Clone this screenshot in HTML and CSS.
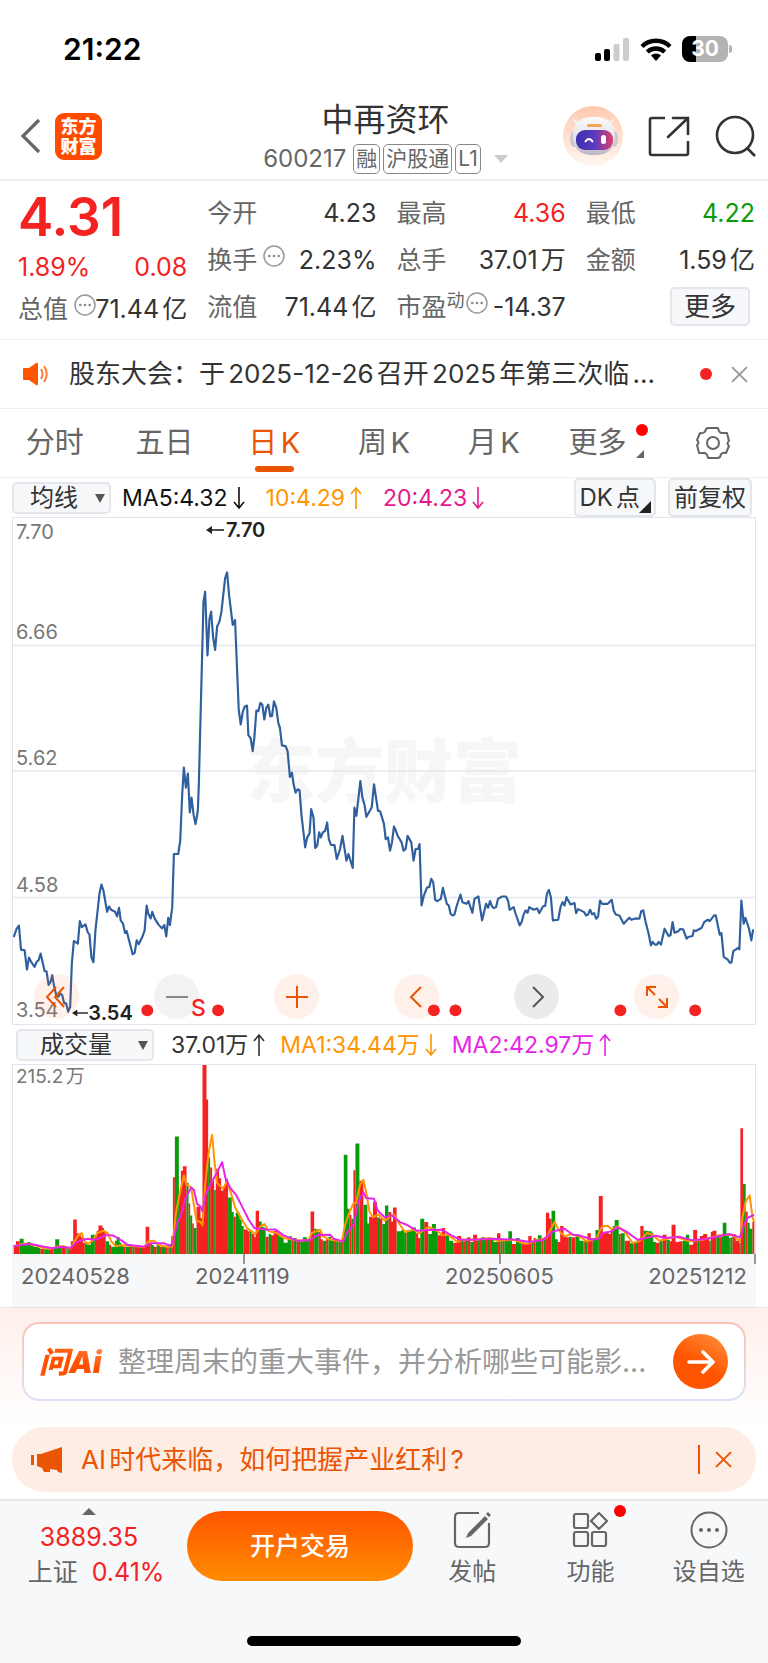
FILE: index.html
```html
<!DOCTYPE html>
<html lang="zh-CN">
<head>
<meta charset="utf-8">
<meta name="viewport" content="width=device-width, initial-scale=1">
<title>中再资环 600217</title>
<link rel="stylesheet" href="styles.css">
</head>
<body>
<svg class="defs" aria-hidden="true">
  <symbol id="up" viewBox="0 0 14 24"><path d="M7 23V2M2 8l5-6 5 6" fill="none" stroke="currentColor" stroke-width="1.6"/></symbol>
  <symbol id="down" viewBox="0 0 14 24"><path d="M7 1v21M2 16l5 6 5-6" fill="none" stroke="currentColor" stroke-width="1.6"/></symbol>
  <symbol id="info" viewBox="0 0 22 22"><circle cx="11" cy="11" r="10" fill="none" stroke="#999" stroke-width="1.5"/><g fill="#888"><circle cx="6.3" cy="11" r="1.3"/><circle cx="11" cy="11" r="1.3"/><circle cx="15.7" cy="11" r="1.3"/></g></symbol>
  <symbol id="close" viewBox="0 0 16 16"><path d="M1 1l14 14M15 1L1 15" fill="none" stroke="currentColor" stroke-width="1.8"/></symbol>
  <symbol id="point" viewBox="0 0 18 10"><path d="M5 5h13" stroke="#222" stroke-width="1.6"/><path d="M0 5l6-4v8z" fill="#222"/></symbol>
</svg>

<div class="status">
  <span class="clock">21:22</span>
  <span class="status-icons">
    <svg width="35" height="24" viewBox="0 0 35 24"><rect x="0" y="16" width="6" height="8" rx="2"/><rect x="9" y="12" width="6" height="12" rx="2"/><g fill="#ccc"><rect x="18.500" y="7" width="6" height="17" rx="2"/><rect x="28" y="1" width="6" height="23" rx="2"/></g></svg>
    <svg width="32" height="24" viewBox="0 0 32 24"><g fill="none" stroke="#000" stroke-width="4.400"><path d="M2 9.500a20 20 0 0 1 28 0"/><path d="M7.300 15a12.500 12.500 0 0 1 17.400 0"/></g><path d="M11 18.500a7.500 7.500 0 0 1 10 0L16 24z"/></svg>
    <span class="battery">30</span>
  </span>
</div>

<header class="head">
  <div class="head-left">
    <button class="plain" aria-label="返回"><svg width="22" height="36" viewBox="0 0 22 36"><path d="M19 2L3 18l16 16" fill="none" stroke="#666" stroke-width="3.200"/></svg></button>
    <a class="brand" href="#">东方<br>财富</a>
  </div>
  <div class="head-mid">
    <h1>中再资环</h1>
    <div class="sub"><span>600217</span><span class="tag">融</span><span class="tag">沪股通</span><span class="tag">L1</span><i class="caret"></i></div>
  </div>
  <div class="head-right">
    <button class="plain" aria-label="智能助手"><svg width="60" height="60" viewBox="0 0 60 60">
      <defs>
        <linearGradient id="halo" x1="0" y1="0" x2="0" y2="1"><stop offset="0" stop-color="#ffc9ae"/><stop offset="1" stop-color="#fff6f0"/></linearGradient>
        <linearGradient id="visor"><stop offset="0" stop-color="#3b2fae"/><stop offset=".5" stop-color="#5b3ac0"/><stop offset="1" stop-color="#e0416a"/></linearGradient>
        <linearGradient id="shell" x1="0" y1="0" x2="0" y2="1"><stop offset="0" stop-color="#fafafa"/><stop offset=".6" stop-color="#e2e0e6"/><stop offset="1" stop-color="#b9b5c2"/></linearGradient>
      </defs>
      <circle cx="30" cy="30" r="30" fill="url(#halo)"/>
      <path d="M9 11q1 7 7 8l4-3q-7 0-11-5zM52 11q-1 7-7 8l-4-3q7 0 11-5z" fill="#eee"/>
      <ellipse cx="11" cy="33" rx="4" ry="8" fill="#c9c6d0"/><ellipse cx="51" cy="33" rx="4" ry="8" fill="#c9c6d0"/>
      <path d="M10 30c0-14 8-19 21-19s21 5 21 19-8 19-21 19-21-5-21-19z" fill="url(#shell)"/>
      <rect x="24" y="18" width="15" height="3" rx="1.500" fill="#f5a55b"/>
      <rect x="13" y="24" width="37" height="20" rx="9" fill="url(#visor)"/>
      <path d="M22 36q4-6 8 0" fill="none" stroke="#fff" stroke-width="2"/><rect x="38" y="29" width="5" height="9" rx="2.500" fill="#fff"/>
    </svg></button>
    <button class="plain" aria-label="分享"><svg width="42" height="42" viewBox="0 0 42 42"><g fill="none" stroke="#333" stroke-width="2.600"><path d="M17 3H4Q2 3 2 5v33q0 2 2 2h34q2 0 2-2V26"/><path d="M25 3h15v16M40 3L20 22" stroke-linecap="round"/></g></svg></button>
    <button class="plain" aria-label="搜索"><svg width="42" height="42" viewBox="0 0 42 42"><g fill="none" stroke="#333" stroke-width="2.600"><circle cx="20" cy="20" r="18"/><path d="M32 33l8 8"/></g></svg></button>
  </div>
</header>

<section class="quote">
  <div class="col col-price">
    <div class="price">4.31</div>
    <div class="cell red"><span>1.89%</span><span>0.08</span></div>
    <div class="cell tight"><span class="lab">总值<svg class="info"><use href="#info"/></svg></span><span>71.44亿</span></div>
  </div>
  <div class="col">
    <div class="cell"><span class="lab">今开</span><span>4.23</span></div>
    <div class="cell"><span class="lab">换手<svg class="info"><use href="#info"/></svg></span><span>2.23%</span></div>
    <div class="cell"><span class="lab">流值</span><span>71.44亿</span></div>
  </div>
  <div class="col">
    <div class="cell"><span class="lab">最高</span><span class="red">4.36</span></div>
    <div class="cell"><span class="lab">总手</span><span>37.01万</span></div>
    <div class="cell tight"><span class="lab">市盈<sup>动</sup><svg class="info flush"><use href="#info"/></svg></span><span>-14.37</span></div>
  </div>
  <div class="col">
    <div class="cell"><span class="lab">最低</span><span class="green">4.22</span></div>
    <div class="cell"><span class="lab">金额</span><span>1.59亿</span></div>
    <div class="cell end"><button class="box more">更多</button></div>
  </div>
</section>

<section class="news">
  <svg width="28" height="24" viewBox="0 0 28 24"><path d="M1 7q0-1 1-1h5l7-5q2-1 2 1v20q0 2-2 1l-7-5H2q-1 0-1-1z" fill="#ff5500"/><path d="M19 7q3 5 0 10M22 4q5.500 8 0 16" fill="none" stroke="#ff7a33" stroke-width="2"/></svg>
  <a href="#">股东大会：于2025-12-26召开2025年第三次临...</a>
  <i class="dot"></i>
  <button class="plain grey" aria-label="关闭"><svg width="17" height="17"><use href="#close"/></svg></button>
</section>

<nav class="tabs">
  <button>分时</button><button>五日</button><button class="on">日K</button><button>周K</button><button>月K</button>
  <button class="has-more"><span>更多<i class="dot"></i></span></button>
  <button aria-label="设置"><svg width="34" height="34" viewBox="0 0 34 34"><g fill="none" stroke="#666" stroke-width="2"><path d="M12 2h10q1 5 4 5l5 0 2 8q-3 2 0 5l-3 7q-5-1-6 4l-2 1H12q-1-5-4-5l-5 0-2-8q3-2 0-5l3-7q5 1 6-4z" stroke-linejoin="round"/><circle cx="17" cy="17" r="6"/></g></svg></button>
</nav>

<section class="bar">
  <label class="pick"><select aria-label="均线"><option>均线</option></select></label>
  <span class="ma black">MA5:4.32<svg class="arr"><use href="#down"/></svg></span>
  <span class="ma orange">10:4.29<svg class="arr"><use href="#up"/></svg></span>
  <span class="ma pink">20:4.23<svg class="arr"><use href="#down"/></svg></span>
  <span class="bar-right"><button class="box dk">DK点</button><button class="box">前复权</button></span>
</section>

<section class="chart">
  <span class="mark">东方财富</span>
  <svg class="plot" viewBox="36 18 2232 1524" preserveAspectRatio="none" fill="none">
    <path d="M36 402H2268M36 780H2268M36 1161H2268" stroke="#e3e8ee" stroke-width="5"/>
    <g stroke="#2f5f9e" stroke-width="6.500" stroke-linejoin="round">
      <polyline points="38,1280 47,1255 54,1246 60,1318 71,1320 78,1378 84,1342 90,1354 101,1370 107,1355 113,1350 119,1330 131,1382 137,1384 143,1424 149,1415 154,1395 160,1430 166,1455 172,1460 178,1450 184,1455 190,1480 196,1480 202,1505 208,1490 213,1360 219,1292 231,1300 237,1232 243,1250 254,1242 261,1266 266,1272 272,1342 278,1356 284,1260 296,1150 302,1122 308,1140 319,1204 325,1188 331,1198 343,1204 349,1218 355,1192 360,1230 367,1240 373,1268 378,1262 385,1290 396,1332 402,1328 408,1290 414,1302 425,1280 432,1260 438,1185 443,1210 450,1224 455,1204 462,1224 473,1242 484,1254 491,1244 497,1278 503,1222 508,1244 515,1190 520,1030 533,1030 539,990 545,850 550,770 556,830 562,788 568,905 573,860 579,910 585,940 592,900 595,820 609,270 614,240 621,432 627,322 632,300 638,378 644,415 650,345 657,330 663,300 674,200 680,182 686,250 697,340 704,325 709,450 715,595 721,640 727,603 733,586 740,583 744,672 751,682 757,720 762,680 768,598 774,600 780,575 786,580 792,625 798,590 804,580 810,615 815,615 821,570 828,590 834,635 839,650 845,703 856,705 862,720 869,798 875,785 880,820 886,845 892,835 898,838 904,915 915,1010 921,980 928,968 933,895 940,920 945,1012 951,1005 957,965 962,980 968,965 975,960 981,935 986,985 993,1003 1003,1003 1010,1045 1020,1015 1027,975 1039,1050 1045,1030 1058,1072 1063,890 1069,915 1081,810 1087,860 1093,880 1099,918 1115,890 1122,820 1128,860 1134,900 1140,900"/>
      <polyline transform="translate(1140 810)" points="0,90 12,130 17,175 24,170 30,210 36,185 42,137 47,148 53,165 65,185 71,210 77,205 83,165 94,185 101,240 107,205 114,205 119,190 125,375 132,345 142,320 148,320 154,295 160,305 166,358 172,362 183,355 189,322 201,370 207,375 212,400 218,405 224,402 231,375 242,342 248,365 260,370 266,362 272,380 278,397 284,355 296,348 307,420 319,370 325,382 331,362 337,378 343,383 349,380 355,355 367,348 379,348 385,360 390,388 402,380 408,400 420,435 426,425 432,402 438,390 444,397 449,380 462,388 473,384 479,398 490,378 497,376 502,340 508,328 514,350 520,420 536,418 543,380 549,365 555,375 561,350 573,372 585,368 590,398 596,386 614,395 620,405 626,402 632,388 638,402 644,398 650,415 656,408 662,360 668,370 685,370 697,358 703,390 709,402 720,405 733,430 744,418 750,412 756,418 768,414 780,415 786,392 792,390 798,420 808,460 815,495 820,485 827,493 833,493 838,485 845,493 856,445 868,467 874,464 880,425 886,457 897,453 903,446 912,447 922,475 927,470 940,467 944,450 950,452 968,442 975,425 986,418 992,422 1005,405 1010,405 1022,463 1027,458 1034,530 1046,538 1052,547 1057,547 1063,512 1070,508 1076,503 1081,507 1087,360 1094,430 1099,412 1110,445 1117,480 1122,450 1125,450"/>
    </g>
  </svg>
  <span class="scale s1">7.70</span><span class="scale s2">6.66</span><span class="scale s3">5.62</span><span class="scale s4">4.58</span><span class="scale s5">3.54</span>
  <div class="controls">
    <button class="warm" aria-label="最早"><svg width="24" height="24" viewBox="0 0 24 24"><path d="M11 2L2 12l9 10M19 2l-9 10 9 10"/></svg></button>
    <button class="cool" aria-label="缩小"><svg width="24" height="24" viewBox="0 0 24 24"><path d="M1 12h22"/></svg></button>
    <button class="warm" aria-label="放大"><svg width="24" height="24" viewBox="0 0 24 24"><path d="M1 12h22M12 1v22"/></svg></button>
    <button class="warm" aria-label="向前"><svg width="24" height="24" viewBox="0 0 24 24"><path d="M16 2L6 12l10 10"/></svg></button>
    <button class="cool deep" aria-label="向后"><svg width="24" height="24" viewBox="0 0 24 24"><path d="M8 2l10 10L8 22"/></svg></button>
    <button class="warm" aria-label="全屏"><svg width="24" height="24" viewBox="0 0 24 24"><path d="M2 11V2h9M2 2l8 8M22 13v9h-9M22 22l-8-8"/></svg></button>
  </div>
  <svg class="plot over" viewBox="36 18 2232 1524" preserveAspectRatio="none" fill="#f52222"><circle cx="440" cy="1501" r="18"/><circle cx="653" cy="1501" r="18"/><circle cx="1302" cy="1501" r="18"/><circle cx="1367" cy="1501" r="18"/><circle cx="1863" cy="1501" r="18"/><circle cx="2088" cy="1501" r="18"/></svg>
  <span class="flag high"><svg><use href="#point"/></svg>7.70</span>
  <span class="flag low"><svg><use href="#point"/></svg>3.54</span>
  <span class="sell">S</span>
</section>

<section class="bar bar-vol">
  <label class="pick wide"><select aria-label="指标"><option>成交量</option></select></label>
  <span class="ma dark">37.01万<svg class="arr"><use href="#up"/></svg></span>
  <span class="ma orange">MA1:34.44万<svg class="arr"><use href="#down"/></svg></span>
  <span class="ma violet">MA2:42.97万<svg class="arr"><use href="#up"/></svg></span>
</section>

<section class="volume">
  <span class="vol-max">215.2万</span>
  <svg class="plot" viewBox="36 40 2232 568" preserveAspectRatio="none" fill="none">
    <path id="bars-up" fill="#f52222"/><path id="bars-down" fill="#0a9b0a"/>
    <g stroke-width="6" stroke-linejoin="round">
      <polyline stroke="#ff9500" points="38,585 60,578 85,578 110,584 130,590 150,592 172,585 190,585 208,592 220,572 232,552 243,545 250,568 262,578 275,568 290,545 308,538 320,545 332,570 345,584 365,582 400,584 430,588 443,570 460,568 475,582 500,586 515,586 527,480 540,415 550,372 558,400 572,408 580,460 588,508 600,512 606,522 614,400 625,300 635,250 642,330 650,395 668,412 680,388 690,420 705,470 725,505 740,530 765,548 780,525 793,518 805,540 830,545 850,560 900,568 925,566 935,545 960,535 968,555 990,565 1025,570 1035,520 1045,490 1060,456 1068,455 1080,400 1090,385 1098,420 1108,480 1118,497 1135,490 1155,508 1170,495 1182,490 1200,520 1215,542 1240,535 1260,545 1285,527 1305,535 1330,552 1345,550 1372,572 1390,565 1430,565 1470,560 1495,568 1540,565 1580,578 1620,565 1640,560 1665,512 1680,540 1695,555 1715,548 1740,555 1762,570 1790,562 1808,525 1825,523 1838,535 1855,525 1875,540 1900,575 1920,570 1943,545 1960,550 1980,568 2030,556 2070,570 2110,565 2160,552 2200,550 2223,570 2230,500 2240,450 2252,432 2260,495 2265,512"/>
      <polyline stroke="#e626e6" points="38,585 60,580 90,578 130,586 155,591 180,586 210,590 225,574 245,566 260,562 285,565 315,552 335,552 355,562 380,580 430,586 450,576 490,576 512,584 520,560 530,515 542,490 555,440 572,408 580,415 590,458 600,465 606,480 615,430 635,390 650,362 665,332 675,380 690,410 708,432 725,465 745,505 762,530 800,535 825,534 850,552 890,568 930,566 950,552 990,550 1000,562 1030,570 1040,545 1060,520 1075,450 1090,422 1098,440 1122,442 1132,475 1140,485 1155,498 1175,492 1200,512 1220,520 1250,538 1285,536 1325,535 1355,552 1380,565 1420,565 1480,562 1550,565 1590,572 1630,566 1660,540 1695,532 1720,550 1740,552 1780,565 1800,560 1810,545 1835,540 1855,528 1880,540 1915,565 1970,553 2000,560 2040,556 2080,567 2120,563 2190,548 2223,558 2235,520 2245,500 2265,490"/>
    </g>
  </svg>
</section>
<div class="axis"><span>20240528</span><span class="tick">20241119</span><span class="tick t2">20250605</span><span class="tick t3">20251212</span></div>

<section class="ask">
  <form class="ask-box">
    <label for="q" class="ask-logo">问Ai</label>
    <input id="q" type="text" placeholder="整理周末的重大事件，并分析哪些可能影...">
    <button type="button" aria-label="发送"><svg width="30" height="26" viewBox="0 0 30 26"><path d="M3 13h24M17 3l10 10-10 10" fill="none" stroke="#fff" stroke-width="3.600" stroke-linecap="round" stroke-linejoin="round"/></svg></button>
  </form>
</section>

<section class="promo">
  <svg width="31" height="26" viewBox="0 0 31 26"><path d="M0 8h3v10H0zM6 7h4L31 0v26l-4-1-1-2-7-1v3h-6l-2-4-5-2z" fill="#ea5504"/></svg>
  <a href="#">AI时代来临，如何把握产业红利?</a>
  <i class="rule"></i>
  <button class="plain" aria-label="关闭"><svg width="17" height="17"><use href="#close"/></svg></button>
</section>

<footer class="foot">
  <div class="foot-row">
    <a class="index" href="#"><i class="tri"></i><span class="red">3889.35</span><span class="index-row"><span class="lab">上证</span><span class="red">0.41%</span></span></a>
    <button class="trade">开户交易</button>
    <a class="act" href="#"><svg width="38" height="38" viewBox="0 0 38 38"><path d="M26 2H6Q2 2 2 6v26q0 4 4 4h26q4 0 4-4V12" fill="none" stroke="#666" stroke-width="2.200"/><path d="M32 5l3 3-17 17-5 2 2-5zM33 3l2-2 3 3-2 2z" fill="#666"/></svg>发帖</a>
    <a class="act" href="#"><span class="ico"><svg width="38" height="38" viewBox="0 0 38 38"><g fill="none" stroke="#666" stroke-width="2.200"><rect x="3" y="3" width="14" height="14" rx="2"/><rect x="3" y="21" width="14" height="14" rx="2"/><rect x="21" y="21" width="14" height="14" rx="2"/><path d="M28 2l8 8-8 8-8-8z" stroke-linejoin="round"/></g></svg><i class="dot"></i></span>功能</a>
    <a class="act" href="#"><svg width="38" height="38" viewBox="0 0 38 38"><circle cx="19" cy="19" r="17.500" fill="none" stroke="#666" stroke-width="2"/><g fill="#666"><circle cx="11" cy="19" r="2"/><circle cx="19" cy="19" r="2"/><circle cx="27" cy="19" r="2"/></g></svg>设自选</a>
  </div>
  <i class="home"></i>
</footer>
<script src="volume.js"></script>
</body>
</html>
```
FILE: styles.css
```css
* { box-sizing: border-box; }
body { margin: 0; background: #fff; color: #333; font: 24px/30px Inter, "Noto Sans CJK SC", sans-serif; text-autospace: normal; }
button, input, select { font: inherit; color: inherit; margin: 0; padding: 0; border: 0; background: none; }
a { color: inherit; text-decoration: none; }
svg { display: block; flex: none; }
i { display: block; }
.defs { position: absolute; width: 0; height: 0; }
.plain { display: flex; }
.red { color: #f52222; }
.green { color: #0a9b0a; }
.grey { color: #999; }
.black { color: #111; }
.orange { color: #ff9500; }
.pink { color: #e6168c; }
.violet { color: #e626e6; }
.lab { color: #666; }
.dot { width: 12px; height: 12px; border-radius: 50%; background: #f52222; flex: none; }

.status { display: flex; justify-content: space-between; align-items: center; padding: 33px 40px 33px 63px; color: #000; }
.clock { font-size: 30px; line-height: 32px; font-weight: 600; }
.status-icons { display: flex; gap: 10px; align-items: center; }
.battery { position: relative; width: 46px; height: 26px; border-radius: 8px; background: linear-gradient(90deg, #000 30%, #b3b3b3 30%); color: #fff; font-size: 21px; line-height: 26px; font-weight: 700; text-align: center; }
.battery::after { content: ""; position: absolute; right: -4px; top: 9px; width: 3px; height: 8px; border-radius: 0 4px 4px 0; background: #b3b3b3; }

.head { display: grid; grid-template-columns: 1fr auto 1fr; align-items: center; height: 83px; padding: 0 11px 6px 20px; border-bottom: 2px solid #eee; }
.head-left { display: flex; align-items: center; gap: 13px; }
.brand { width: 47px; height: 47px; padding-top: 4px; border-radius: 9px; background: #ff4a00; color: #fff; font-size: 18px; line-height: 20px; font-weight: 900; text-align: center; }
.head-mid { display: flex; flex-direction: column; align-items: center; gap: 5px; padding: 3px 6px 0 0; }
h1 { margin: 0; font-size: 32px; line-height: 38px; font-weight: 400; }
.sub { display: flex; align-items: center; gap: 3px; color: #666; font-size: 24px; }
.sub span:first-child { margin-right: 4px; }
.tag { padding: 0 2px; border: 1px solid #888; border-radius: 5px; font-size: 21px; line-height: 28px; }
.caret { margin-left: 10px; border: 7px solid transparent; border-top: 8px solid #ccc; border-bottom: 0; }
.head-right { display: flex; align-items: center; justify-content: flex-end; gap: 25px; }

.quote { display: grid; grid-template-columns: repeat(4, 1fr); gap: 20px; padding: 8px 13px 9px 18px; border-bottom: 1px solid #eee; }
.col { display: grid; grid-template-rows: repeat(3, 47px); min-width: 0; }
.col-price { grid-template-rows: 57px 42px 42px; }
.cell { display: flex; justify-content: space-between; align-items: center; font-size: 25px; white-space: nowrap; }
.cell .lab { display: flex; align-items: center; }
.cell.end { justify-content: flex-end; padding-right: 5px; }
.price { color: #f52222; font-size: 53px; line-height: 57px; font-weight: 600; }
.info { width: 22px; height: 22px; margin: 0 0 8px 6px; }
.tight .info { margin-right: -12px; }
.tight .info.flush { margin-left: 1px; margin-right: 0; }
sup { font-size: 18px; line-height: 18px; margin-bottom: 12px; }
.box { display: block; height: 39px; border: 2px solid #e3e6eb; border-radius: 5px; background: #f7f8fa; font-size: 24px; line-height: 35px; padding: 0 4px; }
.more { width: 80px; font-size: 26px; }

.news { display: flex; align-items: center; gap: 19px; height: 69px; padding: 0 20px 0 22px; border-bottom: 1px solid #eee; font-size: 26px; }
.news a { flex: 1; white-space: nowrap; overflow: hidden; }

.tabs { display: grid; grid-template-columns: repeat(7, 1fr); height: 69px; border-bottom: 1px solid #eee; color: #666; font-size: 29px; }
.tabs button { position: relative; display: flex; align-items: center; justify-content: center; }
.tabs .on { color: #ea5504; }
.tabs .on::after { content: ""; position: absolute; bottom: 5px; width: 39px; height: 6px; border-radius: 3px; background: #ea5504; }
.tabs .has-more { padding-right: 12px; }
.has-more span { position: relative; }
.has-more span::after { content: ""; position: absolute; right: -18px; bottom: 0; border: 4px solid #666; border-top-color: transparent; border-left-color: transparent; }
.has-more .dot { position: absolute; right: -22px; top: -4px; background: #f00; }

.bar { display: flex; align-items: center; gap: 20px; height: 39px; padding: 0 16px 0 12px; white-space: nowrap; }
.pick { position: relative; width: 99px; margin-right: -9px; flex: none; }
.pick select { display: block; width: 100%; height: 32px; padding: 0 28px 0 16px; appearance: none; border: 2px solid #e3e6eb; border-radius: 5px; background: #f7f8fa; font-size: 24px; line-height: 28px; }
.pick::after { content: ""; position: absolute; right: 6px; top: 12px; border: 5px solid transparent; border-top: 9px solid #555; border-bottom: 0; pointer-events: none; }
.ma { display: flex; align-items: center; gap: 4px; font-size: 23px; }
.arr { width: 14px; height: 24px; }
.bar-right { display: flex; gap: 12px; margin-left: auto; }
.dk { position: relative; padding-right: 14px; }
.dk::after { content: ""; position: absolute; right: 3px; bottom: 2px; border: 6px solid #222; border-top-color: transparent; border-left-color: transparent; }
.bar-vol { gap: 14px; padding-left: 16px; text-autospace: no-autospace; }
.pick.wide { width: 138px; margin-right: 3px; }
.pick.wide select { padding-left: 22px; }

.chart { position: relative; height: 508px; margin: 0 12px; border: 1px solid #e1e5ea; }
.plot { position: absolute; inset: 0; width: 100%; height: 100%; }
.over { pointer-events: none; }
.mark { position: absolute; top: 216px; left: 0; right: 0; text-align: center; color: #f6f6f6; font-size: 69px; line-height: 76px; font-weight: 900; }
.scale { position: absolute; left: 3px; color: #777; font-size: 20px; line-height: 24px; }
.s1 { top: 2px; } .s2 { top: 102px; } .s3 { top: 228px; } .s4 { top: 355px; } .s5 { bottom: 2px; }
.controls { position: absolute; left: 21px; right: 76px; bottom: 5px; display: flex; justify-content: space-between; }
.controls button { display: flex; align-items: center; justify-content: center; width: 45px; height: 45px; border-radius: 50%; }
.controls path { fill: none; stroke: currentColor; stroke-width: 2; }
.warm { background: rgba(255, 110, 40, .1); color: #ea5504; }
.cool { background: rgba(0, 0, 0, .05); color: #888; }
.cool.deep { background: rgba(0, 0, 0, .08); color: #555; }
.flag { position: absolute; display: flex; align-items: center; gap: 2px; color: #222; font-size: 20px; line-height: 24px; font-weight: 600; }
.flag svg { width: 18px; height: 10px; }
.high { left: 26%; top: 0; }
.low { left: 8%; bottom: -1px; }
.low svg { width: 16px; }
.low { gap: 0; }
.sell { position: absolute; left: 24%; bottom: 2px; color: #f52222; font-size: 23px; line-height: 28px; font-weight: 500; }

.volume { position: relative; height: 190px; margin: 0 12px; border: 1px solid #e1e5ea; border-bottom: 0; }
.vol-max { position: absolute; left: 3px; top: 0; color: #777; font-size: 19px; line-height: 24px; }
.axis { position: relative; display: grid; grid-template-columns: 174px 250px 1fr auto; height: 53px; margin: 0 12px; padding: 7px 9px 0; background: #f7f8fa; color: #666; font-size: 22px; }
.tick::before { content: ""; position: absolute; top: 0; left: 231px; width: 2px; height: 10px; background: #999; }
.t2::before { left: 487px; }
.t3::before { left: auto; right: 0; }

.ask { padding: 14px 22px 26px; border-top: 1px solid #e3e3ea; background: linear-gradient(#fff0eb, #fff); }
.ask-box { display: flex; align-items: center; height: 79px; padding: 0 16px 0 15px; border: 2px solid transparent; border-radius: 17px; background: linear-gradient(#fff, #fff) padding-box, linear-gradient(#ffc0b5, #dbe3f5) border-box; text-autospace: no-autospace; }
.ask-logo { width: 79px; font-size: 30px; font-weight: 900; font-style: italic; background: linear-gradient(20deg, #ff5000 50%, #ff9a5c); background-clip: text; color: transparent; }
.ask-box input { flex: 1; min-width: 0; height: 40px; font-size: 28px; outline: 0; text-autospace: no-autospace; }
.ask-box input::placeholder { color: #999; opacity: 1; }
.ask-box button { display: flex; align-items: center; justify-content: center; width: 55px; height: 55px; border-radius: 50%; background: linear-gradient(30deg, #ff5500 45%, #ff9440); }

.promo { display: flex; align-items: center; height: 65px; margin: 0 12px 7px; padding: 0 24px 0 19px; border-radius: 33px; background: #fdede4; color: #ea5504; font-size: 26px; }
.promo a { flex: 1; padding-left: 19px; }
.rule { width: 2px; height: 29px; margin-right: 15px; background: #ea5504; }

.foot { padding-bottom: 17px; border-top: 2px solid #e6e6e6; background: #f7f8fa; }
.foot-row { display: grid; grid-template-columns: 187px 226px 1fr 1fr 1fr; height: 135px; align-items: start; padding-top: 6px; }
.index { display: grid; justify-items: center; gap: 5px; padding: 1px 0 0 5px; white-space: nowrap; font-size: 25px; }
.index > .red { margin: 2px 14px 0 0; }
.index-row { display: flex; gap: 14px; }
.tri { margin-right: 14px; border: 7px solid transparent; border-bottom-color: #666; border-top: 0; }
.trade { margin-top: 4px; height: 70px; border-radius: 35px; background: linear-gradient(#ff5500, #ff8c00); color: #fff; font-size: 25px; font-weight: 500; }
.act { display: grid; justify-items: center; gap: 8px; padding-top: 4px; color: #666; white-space: nowrap; }
.ico { position: relative; }
.ico .dot { position: absolute; right: -17px; top: -6px; background: #f00; }
.home { width: 274px; height: 10px; margin: 0 auto; border-radius: 5px; background: #000; }
```
FILE: volume.js
```js
// Each entry: start position, colour (r = up day, g = down day), height.
var runs = "38r26 45r38 56g46 68g34 80g36 88g26 98g22 108g20 114g18 118r16 130g14 144r14 152r16 158g20 163g44 175g24 181r22 188r18 193g20 197r18 200g20 204r16 210r38 217r104 228r62 234r56 240r50 246r34 252g32 258g28 270g58 282r52 288r70 293r86 305r78 310r66 315g38 325r28 331g22 343g40 348g50 357g34 362g26 367r22 375g22 385r24 395g22 401r26 418g20 424r22 430r24 435r82 446r30 450g30 455g26 460r22 468g28 478r22 484g24 496r24 500g28 503r24 508g30 512r54 517r231 523g353 535r180 541r250 547r264 558g214 564r152 569g116 575r92 580g78 588r142 600r108 606r568 618r464 623g290 629r260 635r220 641g192 646r256 656r228 662r190 668r200 674r226 683g170 694g126 700r112 706g124 718g104 724g84 730r74 742r68 748g72 754r60 762r50 766r130 776g98 784g82 790g80 796r52 805g60 812r56 820r70 830g60 838g52 850g34 862g46 868g54 874r42 880g48 889r42 900g38 908g50 920g44 926r40 931r128 942g76 949g74 955r66 962r44 968g40 978r44 985g52 993g44 1002r40 1008g44 1015r42 1020g38 1026r50 1031g298 1042g136 1048r118 1054g106 1060r252 1066g332 1078r220 1090g148 1102g92 1107r112 1119r156 1131g110 1140r106 1147g90 1155g146 1165r126 1174r98 1179r140 1190g68 1204g72 1215r64 1220g72 1235g80 1248r62 1255r48 1261g106 1273r96 1285g60 1296g90 1308g70 1314r56 1326r78 1336g56 1348g40 1360r34 1372r54 1384g42 1390r38 1396g42 1402r50 1412g36 1420r58 1432g42 1438r44 1444g50 1456r44 1462g46 1468r46 1474g42 1482g36 1492r62 1502g44 1508r42 1514g44 1526g68 1537r30 1549g48 1560g32 1566r30 1586r54 1596g38 1602r48 1608g44 1615g56 1626r40 1632g46 1639r124 1649r106 1656g130 1667g44 1675r36 1682r84 1692r56 1700r50 1708g52 1716r50 1728g54 1740g40 1752r38 1756g42 1764r62 1774r48 1780g44 1788g72 1798r174 1810r62 1816r66 1828r60 1834r66 1840g84 1846g102 1858r60 1864g62 1876r40 1892g32 1902r36 1910g40 1916r42 1923r84 1933g70 1945g68 1957g64 1962g36 1970r34 1980g40 1990r58 2002g42 2012r38 2017r88 2029r36 2040r38 2050g40 2060g58 2070r28 2082r72 2094g44 2102r54 2112r60 2124r46 2130g40 2135r66 2140r70 2152g54 2160r50 2166g52 2171g94 2182g58 2190r48 2194g50 2200r60 2210r40 2220g34 2224r378 2232g210 2240r128 2246g94 2252g76 2260r96 2266r0";
var list = runs.split(" ").map(function (s) { return /(\d+)([rg])(\d+)/.exec(s); });
var path = { r: "", g: "" };
for (var i = 0; i < list.length - 1; i++) {
  path[list[i][2]] += "M" + list[i][1] + " 608v-" + list[i][3] + "H" + list[i + 1][1] + "V608z";
}
document.getElementById("bars-up").setAttribute("d", path.r);
document.getElementById("bars-down").setAttribute("d", path.g);
```
